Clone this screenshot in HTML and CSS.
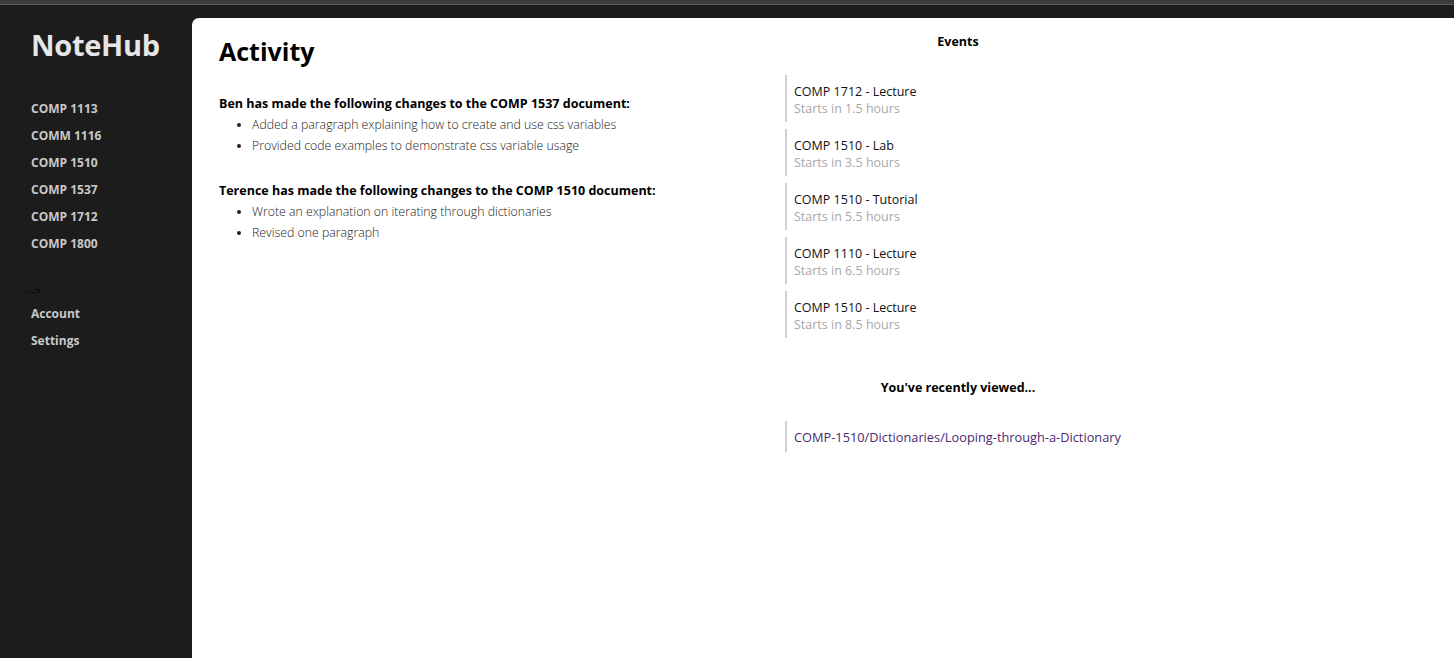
FILE: index.html
```html
<!DOCTYPE html>
<html lang="en">
<head>
  <meta charset="UTF-8">
  <meta name="viewport" content="width=device-width, initial-scale=1.0">
  <title>NoteHub</title>
  <link rel="stylesheet" href="styles.css">
</head>
<body>
  <div class="topbar"></div>
  <div class="layout">
    <nav class="sidebar">
      <h2 class="logo">NoteHub</h2>
      <ul class="courses">
        <li><a href="#">COMP 1113</a></li>
        <li><a href="#">COMM 1116</a></li>
        <li><a href="#">COMP 1510</a></li>
        <li><a href="#">COMP 1537</a></li>
        <li><a href="#">COMP 1712</a></li>
        <li><a href="#">COMP 1800</a></li>
      </ul>
      <div class="stray">--&gt;</div>
      <ul class="courses">
        <li><a href="#">Account</a></li>
        <li><a href="#">Settings</a></li>
      </ul>
    </nav>

    <main class="content">
      <section class="activity">
        <h1>Activity</h1>
        <div class="change">
          <h4>Ben has made the following changes to the COMP 1537 document:</h4>
          <ul>
            <li>Added a paragraph explaining how to create and use css variables</li>
            <li>Provided code examples to demonstrate css variable usage</li>
          </ul>
        </div>
        <div class="change">
          <h4>Terence has made the following changes to the COMP 1510 document:</h4>
          <ul>
            <li>Wrote an explanation on iterating through dictionaries</li>
            <li>Revised one paragraph</li>
          </ul>
        </div>
      </section>

      <aside class="side">
        <h4 class="side-title">Events</h4>
        <div class="event">
          <div class="event-name">COMP 1712 - Lecture</div>
          <div class="event-time">Starts in 1.5 hours</div>
        </div>
        <div class="event">
          <div class="event-name">COMP 1510 - Lab</div>
          <div class="event-time">Starts in 3.5 hours</div>
        </div>
        <div class="event">
          <div class="event-name">COMP 1510 - Tutorial</div>
          <div class="event-time">Starts in 5.5 hours</div>
        </div>
        <div class="event">
          <div class="event-name">COMP 1110 - Lecture</div>
          <div class="event-time">Starts in 6.5 hours</div>
        </div>
        <div class="event">
          <div class="event-name">COMP 1510 - Lecture</div>
          <div class="event-time">Starts in 8.5 hours</div>
        </div>

        <h4 class="side-title recent-title">You've recently viewed...</h4>
        <div class="event recent">
          <a href="#">COMP-1510/Dictionaries/Looping-through-a-Dictionary</a>
        </div>
      </aside>
    </main>
  </div>
</body>
</html>
```

FILE: styles.css
```css
body {
  margin: 0;
  background-color: #1c1c1c;
  font-family: "Open Sans", "Noto Sans", sans-serif;
  color: #000;
}

.topbar {
  height: 4px;
  background-color: #3c3c3c;
  border-bottom: 1px solid #5a5a5a;
}

.layout {
  display: flex;
  min-height: 653px;
}

/* barre de gauche */
.sidebar {
  width: 161px;
  padding-left: 31px;
  flex-shrink: 0;
}

.logo {
  margin: 20px 0 0;
  font-size: 29px;
  font-weight: bold;
  color: #e6e6e6;
  letter-spacing: -0.3px;
}

.courses {
  list-style: none;
  padding: 0;
  margin: 0;
}

.sidebar .logo + .courses {
  margin-top: 32px;
}

.courses li {
  height: 27px;
}

.courses a {
  color: #c8c8c8;
  text-decoration: none;
  font-size: 12px;
  font-weight: bold;
}

.stray {
  margin: 25px 0 0 -4px;
  height: 18px;
  font-size: 11px;
  color: #000;
  font-variant-ligatures: none;
  letter-spacing: 0.5px;
}

/* contenu principal */
.content {
  flex: 1;
  margin-top: 13px;
  background-color: #fff;
  border-top-left-radius: 7px;
  display: grid;
  grid-template-columns: 566px 346px;
  padding-left: 27px;
  align-items: start;
}

.activity h1 {
  margin: 16px 0 0;
  font-size: 25px;
  font-weight: bold;
}

.change {
  margin-top: 27px;
}

.change + .change {
  margin-top: 26px;
}

.change h4 {
  margin: 0 0 2px;
  font-size: 12.5px;
  font-weight: bold;
}

.change ul {
  margin: 0;
  padding-left: 33px;
}

.change li {
  font-size: 12.3px;
  font-weight: 300;
  color: #222;
  line-height: 21px;
}

/* colonne de droite */
.side-title {
  margin: 15px 0 0;
  text-align: center;
  font-size: 12.5px;
  font-weight: bold;
}

.event {
  border-left: 2px solid #d0d0d0;
  padding: 8px 0 5px 7px;
  margin-top: 7px;
  font-size: 12.5px;
  line-height: 17px;
}

.side-title + .event {
  margin-top: 25px;
}

.event-name {
  color: #111;
}

.event-time {
  color: #a8a8a8;
}

.recent-title {
  margin-top: 41px;
}

.side-title.recent-title + .event {
  margin-top: 25px;
}

.recent {
  padding: 8px 0 6px 7px;
}

.recent a {
  color: #4b2a6f;
  text-decoration: none;
  font-size: 12.8px;
}
```
